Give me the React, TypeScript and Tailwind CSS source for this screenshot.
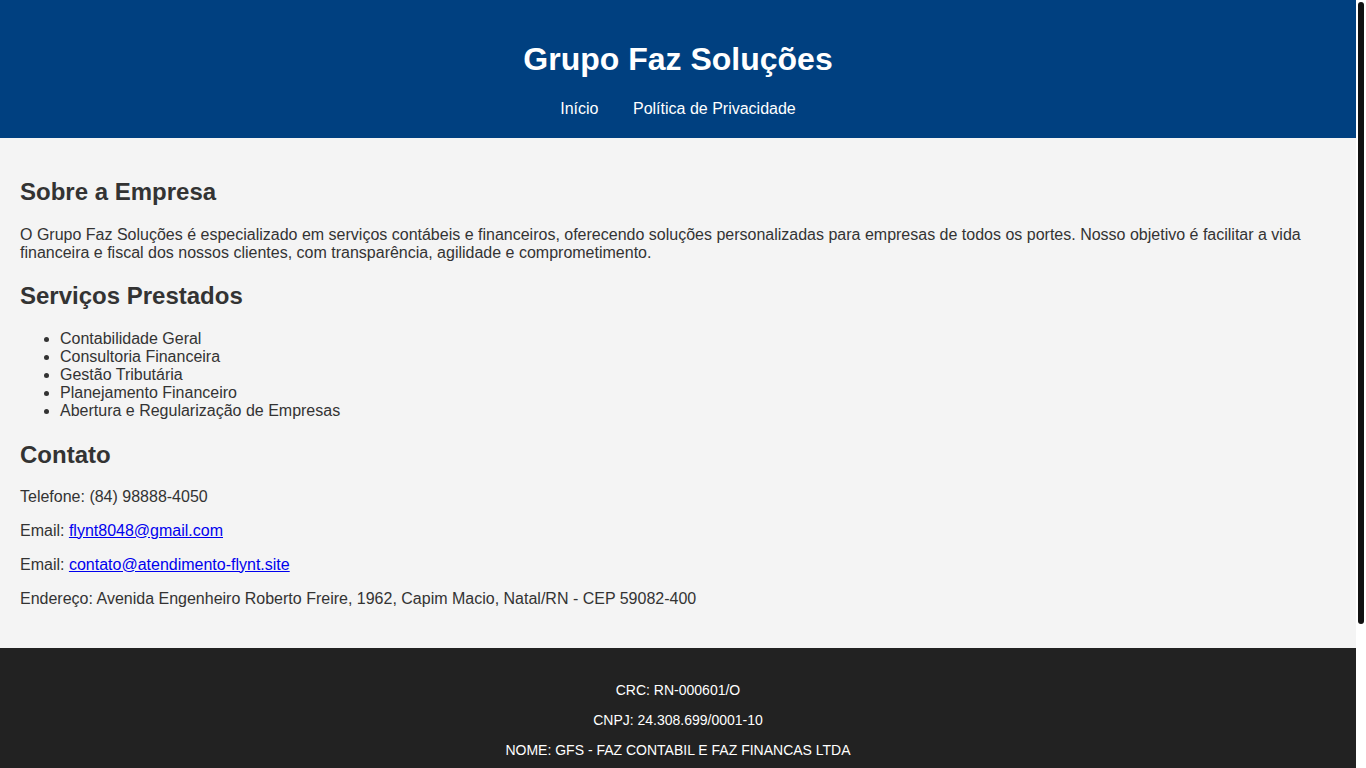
import React from 'react';

const servicos = [
  'Contabilidade Geral',
  'Consultoria Financeira',
  'Gestão Tributária',
  'Planejamento Financeiro',
  'Abertura e Regularização de Empresas',
];

const rodape = [
  'CRC: RN-000601/O',
  'CNPJ: 24.308.699/0001-10',
  'NOME: GFS - FAZ CONTABIL E FAZ FINANCAS LTDA',
  'ENDEREÇO: Avenida Engenheiro Roberto Freire, 1962, Capim Macio, Natal/RN',
  'CEP: 59082-400',
  'TELEFONE: (84) 98888-4050',
  'EMAIL: contato@atendimento-flynt.site',
  '© 2025 Grupo Faz Soluções. Todos os direitos reservados.',
];

export default function App() {
  return (
    <div className="h-screen flex bg-white text-[#333] font-['Liberation_Sans',Arial,sans-serif] leading-[normal]">
      <div className="flex-1 overflow-y-auto [scrollbar-width:none]">
        <header className="bg-[#004080] text-white text-center p-5">
          <h1 className="text-[32px] leading-[normal] font-bold my-[21.44px]">Grupo Faz Soluções</h1>
          <nav>
            <a href="#" className="text-white mx-[15px]">Início</a>{' '}
            <a href="#" className="text-white mx-[15px]">Política de Privacidade</a>
          </nav>
        </header>

        <main className="bg-[#f4f4f4] px-5 pt-5 pb-6">
          <section>
            <h2 className="text-2xl leading-[normal] font-bold my-[19.92px]">Sobre a Empresa</h2>
            <p className="my-4">
              O Grupo Faz Soluções é especializado em serviços contábeis e financeiros, oferecendo soluções
              personalizadas para empresas de todos os portes. Nosso objetivo é facilitar a vida financeira e fiscal
              dos nossos clientes, com transparência, agilidade e comprometimento.
            </p>
          </section>

          <section>
            <h2 className="text-2xl leading-[normal] font-bold my-[19.92px]">Serviços Prestados</h2>
            <ul className="list-disc pl-10 my-4">
              {servicos.map((s) => (
                <li key={s}>{s}</li>
              ))}
            </ul>
          </section>

          <section>
            <h2 className="text-2xl leading-[normal] font-bold mt-[21px] mb-[19px]">Contato</h2>
            <p className="my-4">Telefone: (84) 98888-4050</p>
            <p className="my-4">
              Email: <a href="#" className="text-[#0000ee] underline">flynt8048@gmail.com</a>
            </p>
            <p className="my-4">
              Email: <a href="#" className="text-[#0000ee] underline">contato@atendimento-flynt.site</a>
            </p>
            <p className="my-4">
              Endereço: Avenida Engenheiro Roberto Freire, 1962, Capim Macio, Natal/RN - CEP 59082-400
            </p>
          </section>
        </main>

        <footer className="bg-[#222] text-white text-center text-sm leading-[normal] p-5">
          {rodape.map((l) => (
            <p key={l} className="my-[14px]">{l}</p>
          ))}
        </footer>
      </div>

      {/* barra de rolagem */}
      <div className="w-[10px] shrink-0 bg-white">
        <div className="mx-[2px] mt-[2px] h-[622px] w-[6px] rounded-full bg-[#111]" />
      </div>
    </div>
  );
}
